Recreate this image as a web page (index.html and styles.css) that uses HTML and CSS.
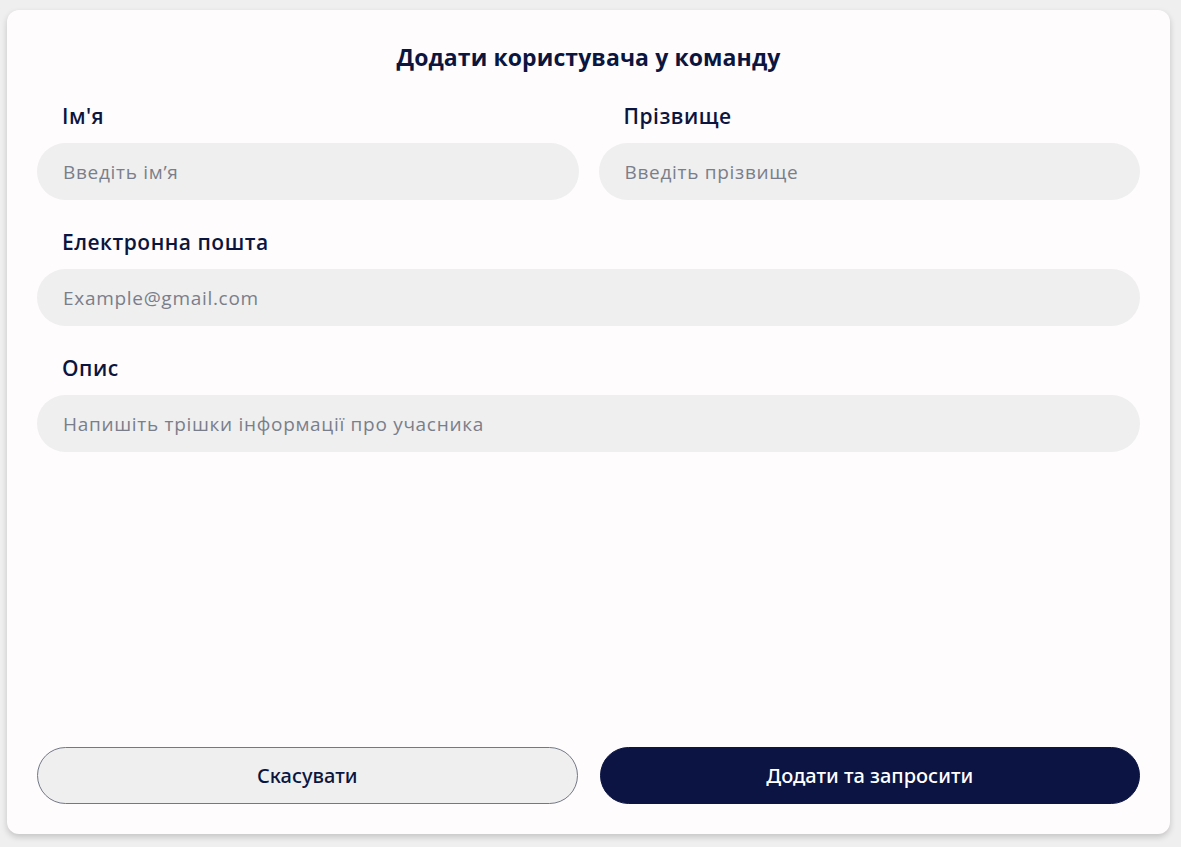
FILE: index.html
```html
<!DOCTYPE html>
<html lang="uk">
<head>
<meta charset="utf-8">
<title>Додати користувача у команду</title>
<link rel="stylesheet" href="styles.css">
</head>
<body>
<div class="page">
  <form class="card">
    <h1 class="title">Додати користувача у команду</h1>
    <div class="row">
      <div class="field">
        <label class="label">Ім'я</label>
        <input class="input" type="text" placeholder="Введіть ім’я">
      </div>
      <div class="field">
        <label class="label">Прізвище</label>
        <input class="input" type="text" placeholder="Введіть прізвище">
      </div>
    </div>
    <div class="field block">
      <label class="label">Електронна пошта</label>
      <input class="input" type="email" placeholder="Example@gmail.com">
    </div>
    <div class="field block">
      <label class="label">Опис</label>
      <input class="input" type="text" placeholder="Напишіть трішки інформації про учасника">
    </div>
    <div class="actions">
      <button type="button" class="btn btn-cancel">Скасувати</button>
      <button type="button" class="btn btn-primary">Додати та запросити</button>
    </div>
  </form>
</div>
</body>
</html>
```

FILE: styles.css
```css
* { box-sizing: border-box; }
html, body { margin: 0; padding: 0; }
body {
  background: #efefef;
  font-family: "Open Sans", "Noto Sans", sans-serif;
  color: #0b1640;
}
.page {
  height: 847px;
  padding: 10px 11px 13px 7px;
  display: flex;
}
.card {
  flex: 1;
  background: #fffcfd;
  border-radius: 12px;
  box-shadow: 0 3px 6px rgba(0,0,0,0.18);
  padding: 32px 30px 30px 30px;
  display: flex;
  flex-direction: column;
}
.title {
  margin: 0 0 30px 0;
  text-align: center;
  font-size: 23px;
  line-height: 30px;
  font-weight: 700;
  letter-spacing: 0.1px;
  color: #0b1640;
}
.row {
  display: flex;
  gap: 20px;
}
.row .field { flex: 1; }
.field {
  display: flex;
  flex-direction: column;
}
.block { margin-top: 28px; }
.label {
  font-size: 21px;
  line-height: 28px;
  font-weight: 600;
  letter-spacing: 0.5px;
  color: #0b1640;
  padding-left: 25px;
  margin-bottom: 13px;
}
.input {
  height: 57px;
  border: none;
  border-radius: 29px;
  background: #efefef;
  padding: 0 26px;
  font-family: inherit;
  font-size: 19px;
  letter-spacing: 0.7px;
  color: #0b1640;
  outline: none;
}
.input::placeholder { color: #7a7e8b; opacity: 1; }
.actions {
  margin-top: auto;
  display: flex;
  gap: 22px;
}
.btn {
  flex: 1;
  height: 57px;
  border-radius: 29px;
  font-family: "Noto Sans", sans-serif;
  font-size: 20px;
  font-weight: 500;
  cursor: pointer;
}
.btn-cancel {
  background: #efefef;
  border: 1px solid #737888;
  color: #0b1640;
}
.btn-primary {
  background: #0b1442;
  border: 1px solid #0b1442;
  color: #ffffff;
}
```
